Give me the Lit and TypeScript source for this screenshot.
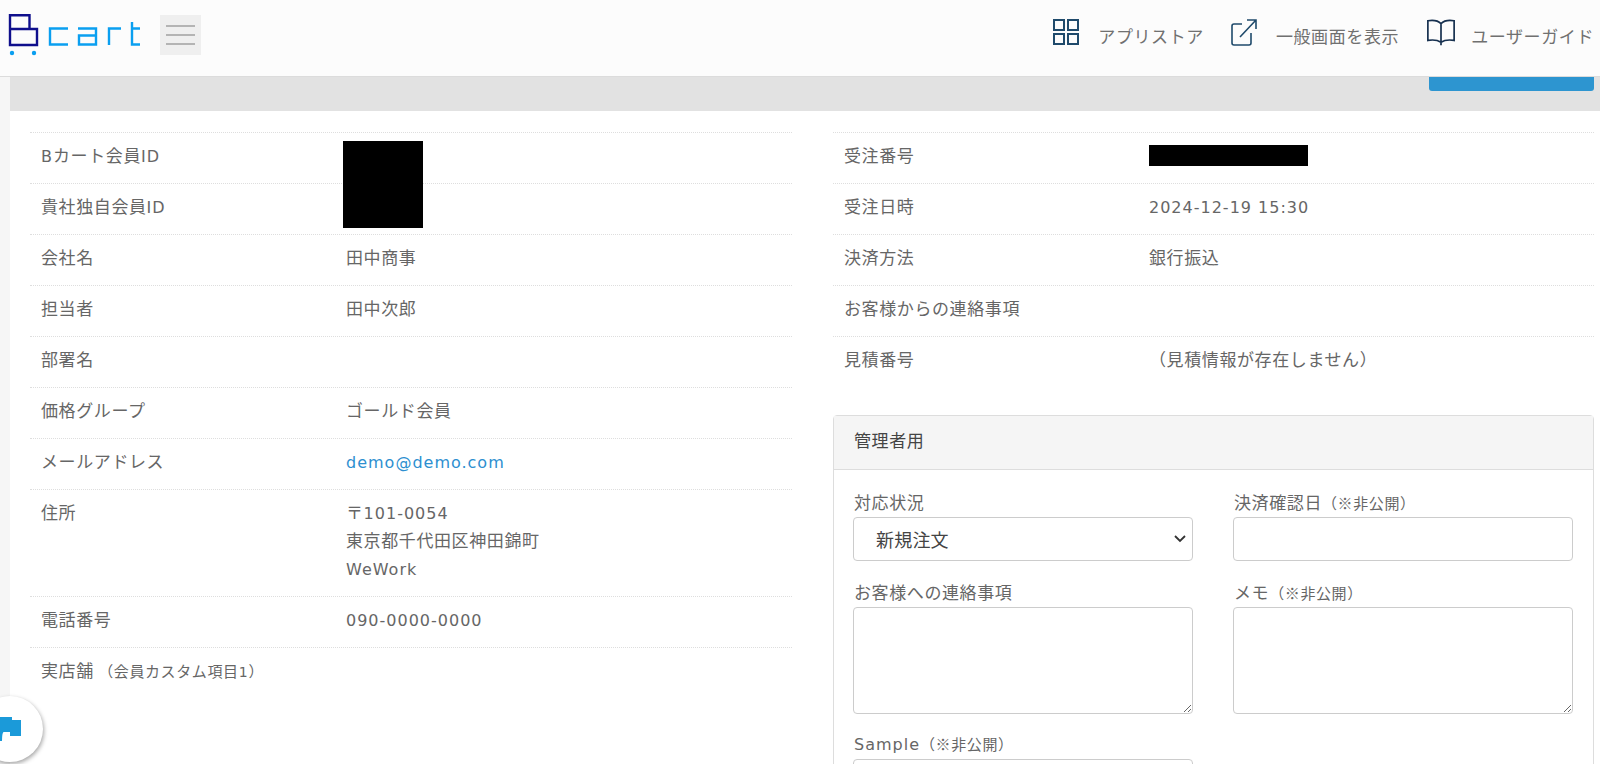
import { LitElement, html, css, svg } from "lit";
import { customElement } from "lit/decorators.js";

const lat = (s: string) => html`<span class="lat">${s}</span>`;

const left: [unknown, unknown][] = [
  [html`${lat("B")}カート会員${lat("ID")}`, ""],
  [html`貴社独自会員${lat("ID")}`, ""],
  ["会社名", "田中商事"],
  ["担当者", "田中次郎"],
  ["部署名", ""],
  ["価格グループ", "ゴールド会員"],
  ["メールアドレス", html`<a class="link lat">demo@demo.com</a>`],
  ["住所", html`〒${lat("101-0054")}<br />東京都千代田区神田錦町<br />${lat("WeWork")}`],
  ["電話番号", lat("090-0000-0000")],
  [html`実店舗 <small class="sub">（会員カスタム項目<span class="lat n">1</span>）</small>`, ""],
];
const right: [unknown, unknown][] = [
  ["受注番号", ""],
  ["受注日時", lat("2024-12-19 15:30")],
  ["決済方法", "銀行振込"],
  ["お客様からの連絡事項", ""],
  ["見積番号", "（見積情報が存在しません）"],
];

@customElement("app-root")
export class AppRoot extends LitElement {
  static styles = css`
    :host {
      display: block;
      height: 764px;
      overflow: hidden;
      position: relative;
      background: #fff;
      color: #666;
      font-family: "Noto Sans CJK JP", "DejaVu Sans", sans-serif;
      font-size: 17px;
      letter-spacing: 0.6px;
    }
    .lat { font-family: "DejaVu Sans", sans-serif; font-size: 16px; letter-spacing: 1px; line-height: 1; }
    .lat.n { font-size: 14px; }
    header {
      height: 76px;
      background: #fcfcfc;
      border-bottom: 1px solid #dcdcdc;
      display: flex;
      align-items: flex-start;
    }
    .logo { margin: 14px 0 0 8px; display: block; flex: none; }
    .burger {
      margin: 15px 0 0 17px;
      width: 41px;
      height: 40px;
      background: #efefef;
      display: flex;
      flex-direction: column;
      justify-content: center;
      align-items: center;
      gap: 7px;
    }
    .burger i { display: block; width: 29px; height: 2px; background: #b4b4b4; }
    .nav { margin-left: auto; display: flex; padding: 18px 6px 0 0; }
    .nav a { display: flex; align-items: center; color: #707070; white-space: nowrap; height: 34px; }
    .nav svg { display: block; margin-bottom: 6px; flex: none; }
    .a1 svg { margin-right: 18px; }
    .a2 { margin-left: 26px; }
    .a2 svg { margin-right: 18px; }
    .a3 { margin-left: 27px; }
    .a3 svg { margin-right: 15px; }
    .body { display: flex; height: 687px; }
    .strip { width: 10px; background: #f6f6f6; flex: none; }
    .main { flex: 1; min-width: 0; display: flex; flex-direction: column; }
    .bar { height: 34px; background: #e2e2e2; position: relative; flex: none; }
    .btn {
      position: absolute; right: 6px; top: 0; width: 165px; height: 14px;
      background: #2d95d0; border-radius: 0 0 3px 3px;
    }
    .cols { display: flex; padding: 21px 6px 0 20px; }
    .col { flex: none; }
    .col.l { width: 762px; margin-right: 41px; }
    .col.r { width: 761px; }
    .row { display: flex; border-top: 1px dotted #dedede; line-height: 28px; min-height: 50px; }
    .k { width: 306px; flex: none; padding: 8px 0 0 11px; box-sizing: border-box; }
    .v { padding: 8px 0 13px 10px; box-sizing: border-box; }
    .col.l .row:nth-child(8) .v { padding-bottom: 14px; }
    .link { color: #2d8fd0; }
    .sub { font-size: 15px; }
    .mask { position: absolute; background: #000; }
    .m1 { left: 343px; top: 141px; width: 80px; height: 87px; }
    .m2 { left: 1149px; top: 145px; width: 159px; height: 21px; }
    .panel {
      margin-top: 28px;
      border: 1px solid #ddd;
      border-radius: 4px 4px 0 0;
      height: 600px;
    }
    .ph { height: 53px; background: #f5f5f5; border-bottom: 1px solid #ddd; padding-left: 20px; line-height: 47px; color: #444; }
    .grid { display: grid; grid-template-columns: 340px 340px; column-gap: 40px; padding: 20px 20px 0 19px; }
    label { display: block; line-height: 24px; height: 24px; margin-bottom: 3px; padding-left: 1px; white-space: nowrap; }
    label small { font-size: 15px; }
    .s label { margin-bottom: 4px; }
    .select, .input, textarea {
      display: block; width: 100%; box-sizing: border-box; border: 1px solid #ccc; border-radius: 4px; background: #fff; margin: 0;
    }
    .select {
      height: 44px; display: flex; align-items: center; padding-left: 22px; justify-content: space-between; padding-right: 6px;
      font-size: 18px; color: #444; letter-spacing: 0.2px;
    }
    .input { height: 44px; }
    textarea { height: 107px; margin-top: 3px; }
    .f { margin-bottom: 19px; }
    .f.t { margin-bottom: 17px; }
    .chat {
      position: absolute; left: -23px; top: 696px; width: 66px; height: 66px; border-radius: 50%;
      background: #fff; box-shadow: 1px 2px 4px rgba(0,0,0,.35); overflow: hidden;
    }
    .chat svg { position: absolute; left: 23px; top: 21px; }
  `;

  private rows(data: [unknown, unknown][]) {
    return data.map(([k, v]) => html`<div class="row"><div class="k">${k}</div><div class="v">${v}</div></div>`);
  }

  render() {
    return html`
      <header>
        <svg class="logo" width="135" height="44" viewBox="0 0 135 44" fill="none">
          <path d="M2 1.2H21.5V15H29V31H2Z M2 15H21.5" stroke="#0f0f8c" stroke-width="2.4" />
          <circle cx="4" cy="39" r="2.2" fill="#0a9ff0" />
          <circle cx="26" cy="39" r="2.2" fill="#0a9ff0" />
          <g stroke="#0a9ff0" stroke-width="2.4">
            <path d="M60 14.5H42V30.5H60" />
            <path d="M70 14.5H88V30.5H71V21.5H88" />
            <path d="M101 31V14.5H113" />
            <path d="M124 8V30.5H132 M124 14.5H132" />
          </g>
        </svg>
        <div class="burger"><i></i><i></i><i></i></div>
        <div class="nav">
          <a class="a1">
            <svg width="28" height="28" viewBox="0 0 28 28" fill="none" stroke="#1f4a6b" stroke-width="2">
              <rect x="2" y="2" width="10" height="10" /><rect x="16" y="2" width="10" height="10" />
              <rect x="2" y="16" width="10" height="10" /><rect x="16" y="16" width="10" height="10" />
            </svg>アプリストア
          </a>
          <a class="a2">
            <svg width="28" height="28" viewBox="0 0 28 28" fill="none" stroke="#1f4a6b" stroke-width="1.6">
              <path d="M12 6H4a2 2 0 0 0-2 2V25a2 2 0 0 0 2 2H19a2 2 0 0 0 2-2V15" />
              <path d="M10 19L26 2M17 2H26V11" />
            </svg>一般画面を表示
          </a>
          <a class="a3">
            <svg width="30" height="28" viewBox="0 0 32 28" fill="none" stroke="#16304f" stroke-width="1.8">
              <path d="M16 5C13 2 8 1 2 2V23C8 22 13 23 16 25C19 23 24 22 30 23V2C24 1 19 2 16 5ZM16 5V28" />
            </svg>ユーザーガイド
          </a>
        </div>
      </header>
      <div class="body">
        <div class="strip"></div>
        <div class="main">
          <div class="bar"><div class="btn"></div></div>
          <div class="cols">
            <div class="col l">${this.rows(left)}</div>
            <div class="col r">
              ${this.rows(right)}
              <div class="panel">
                <div class="ph">管理者用</div>
                <div class="grid">
                  <div class="f"><label>対応状況</label>
                    <div class="select">新規注文
                      ${svg`<svg width="12" height="8" viewBox="0 0 12 8" fill="none" stroke="#333" stroke-width="1.8"><path d="M1 1L6 6L11 1"/></svg>`}
                    </div></div>
                  <div class="f"><label>決済確認日<small>（※非公開）</small></label><div class="input"></div></div>
                  <div class="f t"><label>お客様への連絡事項</label><textarea></textarea></div>
                  <div class="f t"><label>メモ<small>（※非公開）</small></label><textarea></textarea></div>
                  <div class="f s"><label><span class="lat">Sample</span><small>（※非公開）</small></label><div class="input"></div></div>
                </div>
              </div>
            </div>
          </div>
        </div>
      </div>
      <div class="mask m1"></div>
      <div class="mask m2"></div>
      <div class="chat">
        <svg width="21" height="24" viewBox="0 0 21 24" fill="#1b9ad9"><path d="M0 0H12V3H21V19H10V15H3.5Q2 16 2 24H0Z"/></svg>
      </div>
    `;
  }
}
